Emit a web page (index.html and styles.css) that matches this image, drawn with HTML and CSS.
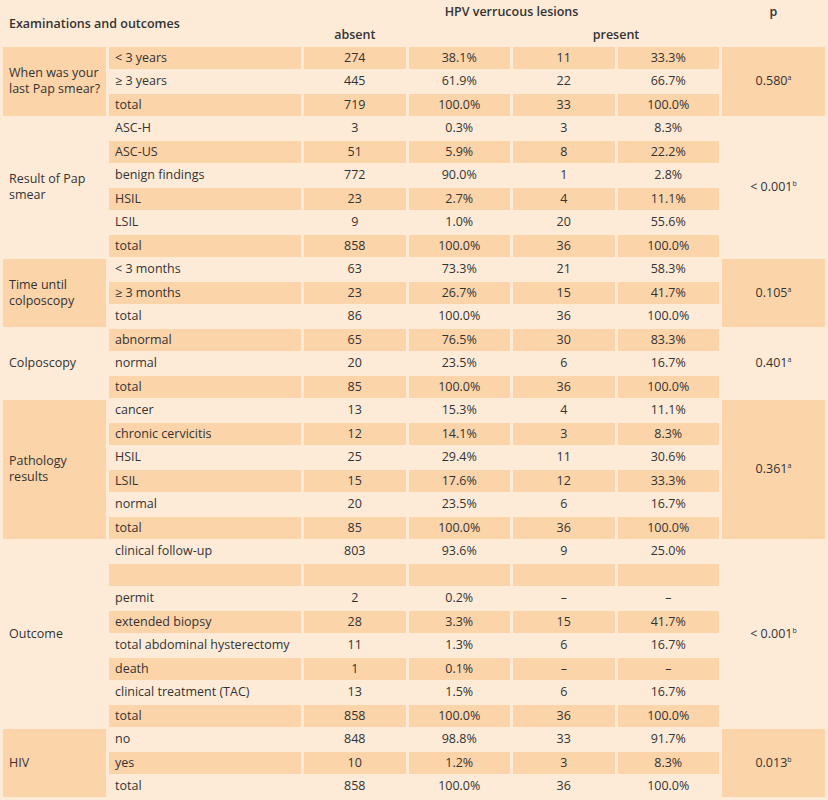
FILE: index.html
```html
<!DOCTYPE html>
<html lang="en">
<head>
  <meta charset="UTF-8">
  <title>HPV verrucous lesions</title>
  <link rel="stylesheet" href="styles.css">
</head>
<body>

  <table class="results">
    <colgroup>
      <col class="c-group">
      <col class="c-item">
      <col class="c-num">
      <col class="c-num">
      <col class="c-num">
      <col class="c-num">
      <col class="c-p">
    </colgroup>
    <thead>
      <tr class="head-1">
        <th rowspan="2" colspan="2" class="title">Examinations and outcomes</th>
        <th colspan="4">HPV verrucous lesions</th>
        <th>p</th>
      </tr>
      <tr class="head-2">
        <th>absent</th>
        <th></th>
        <th colspan="2">present</th>
        <th></th>
      </tr>
    </thead>
    <tbody>
      <!-- last pap smear -->
      <tr class="dk">
        <td rowspan="3" class="grp shade">When was your last Pap smear?</td>
        <td class="item">&lt; 3 years</td><td>274</td><td>38.1%</td><td>11</td><td>33.3%</td>
        <td rowspan="3" class="pv shade">0.580<sup>a</sup></td>
      </tr>
      <tr>
        <td class="item">&ge; 3 years</td><td>445</td><td>61.9%</td><td>22</td><td>66.7%</td>
      </tr>
      <tr class="dk">
        <td class="item">total</td><td>719</td><td>100.0%</td><td>33</td><td>100.0%</td>
      </tr>

      <!-- result of pap smear -->
      <tr>
        <td rowspan="6" class="grp">Result of Pap smear</td>
        <td class="item">ASC-H</td><td>3</td><td>0.3%</td><td>3</td><td>8.3%</td>
        <td rowspan="6" class="pv">&lt; 0.001<sup>b</sup></td>
      </tr>
      <tr class="dk">
        <td class="item">ASC-US</td><td>51</td><td>5.9%</td><td>8</td><td>22.2%</td>
      </tr>
      <tr>
        <td class="item">benign findings</td><td>772</td><td>90.0%</td><td>1</td><td>2.8%</td>
      </tr>
      <tr class="dk">
        <td class="item">HSIL</td><td>23</td><td>2.7%</td><td>4</td><td>11.1%</td>
      </tr>
      <tr>
        <td class="item">LSIL</td><td>9</td><td>1.0%</td><td>20</td><td>55.6%</td>
      </tr>
      <tr class="dk">
        <td class="item">total</td><td>858</td><td>100.0%</td><td>36</td><td>100.0%</td>
      </tr>

      <!-- time until colposcopy -->
      <tr>
        <td rowspan="3" class="grp shade">Time until colposcopy</td>
        <td class="item">&lt; 3 months</td><td>63</td><td>73.3%</td><td>21</td><td>58.3%</td>
        <td rowspan="3" class="pv shade">0.105<sup>a</sup></td>
      </tr>
      <tr class="dk">
        <td class="item">&ge; 3 months</td><td>23</td><td>26.7%</td><td>15</td><td>41.7%</td>
      </tr>
      <tr>
        <td class="item">total</td><td>86</td><td>100.0%</td><td>36</td><td>100.0%</td>
      </tr>

      <!-- colposcopy -->
      <tr class="dk">
        <td rowspan="3" class="grp">Colposcopy</td>
        <td class="item">abnormal</td><td>65</td><td>76.5%</td><td>30</td><td>83.3%</td>
        <td rowspan="3" class="pv">0.401<sup>a</sup></td>
      </tr>
      <tr>
        <td class="item">normal</td><td>20</td><td>23.5%</td><td>6</td><td>16.7%</td>
      </tr>
      <tr class="dk">
        <td class="item">total</td><td>85</td><td>100.0%</td><td>36</td><td>100.0%</td>
      </tr>

      <!-- pathology -->
      <tr>
        <td rowspan="6" class="grp shade">Pathology results</td>
        <td class="item">cancer</td><td>13</td><td>15.3%</td><td>4</td><td>11.1%</td>
        <td rowspan="6" class="pv shade">0.361<sup>a</sup></td>
      </tr>
      <tr class="dk">
        <td class="item">chronic cervicitis</td><td>12</td><td>14.1%</td><td>3</td><td>8.3%</td>
      </tr>
      <tr>
        <td class="item">HSIL</td><td>25</td><td>29.4%</td><td>11</td><td>30.6%</td>
      </tr>
      <tr class="dk">
        <td class="item">LSIL</td><td>15</td><td>17.6%</td><td>12</td><td>33.3%</td>
      </tr>
      <tr>
        <td class="item">normal</td><td>20</td><td>23.5%</td><td>6</td><td>16.7%</td>
      </tr>
      <tr class="dk">
        <td class="item">total</td><td>85</td><td>100.0%</td><td>36</td><td>100.0%</td>
      </tr>

      <!-- outcome -->
      <tr>
        <td rowspan="8" class="grp">Outcome</td>
        <td class="item">clinical follow-up</td><td>803</td><td>93.6%</td><td>9</td><td>25.0%</td>
        <td rowspan="8" class="pv">&lt; 0.001<sup>b</sup></td>
      </tr>
      <tr class="dk">
        <td class="item"></td><td></td><td></td><td></td><td></td>
      </tr>
      <tr>
        <td class="item">permit</td><td>2</td><td>0.2%</td><td>&ndash;</td><td>&ndash;</td>
      </tr>
      <tr class="dk">
        <td class="item">extended biopsy</td><td>28</td><td>3.3%</td><td>15</td><td>41.7%</td>
      </tr>
      <tr>
        <td class="item">total abdominal hysterectomy</td><td>11</td><td>1.3%</td><td>6</td><td>16.7%</td>
      </tr>
      <tr class="dk">
        <td class="item">death</td><td>1</td><td>0.1%</td><td>&ndash;</td><td>&ndash;</td>
      </tr>
      <tr>
        <td class="item">clinical treatment (TAC)</td><td>13</td><td>1.5%</td><td>6</td><td>16.7%</td>
      </tr>
      <tr class="dk">
        <td class="item">total</td><td>858</td><td>100.0%</td><td>36</td><td>100.0%</td>
      </tr>

      <!-- hiv -->
      <tr>
        <td rowspan="3" class="grp shade">HIV</td>
        <td class="item">no</td><td>848</td><td>98.8%</td><td>33</td><td>91.7%</td>
        <td rowspan="3" class="pv shade">0.013<sup>b</sup></td>
      </tr>
      <tr class="dk">
        <td class="item">yes</td><td>10</td><td>1.2%</td><td>3</td><td>8.3%</td>
      </tr>
      <tr>
        <td class="item">total</td><td>858</td><td>100.0%</td><td>36</td><td>100.0%</td>
      </tr>
    </tbody>
  </table>

</body>
</html>
```

FILE: styles.css
```css
* {
  padding: 0;
  margin: 0;
  box-sizing: border-box;
}

body {
  background-color: #fdebd8;
  font-family: 'Open Sans', 'Liberation Sans', sans-serif;
  font-size: 12.5px;
  color: #333333;
}

.results {
  width: 828px;
  table-layout: fixed;
  border-collapse: separate;
  border-spacing: 3px 2px;
}

.c-group { width: 103px; }
.c-item  { width: 192px; }
.c-num   { width: 101.5px; }
.c-p     { width: 103px; }

th {
  font-weight: 600;
  text-align: center;
  vertical-align: middle;
  line-height: 16px;
}

.head-1,
.head-2 {
  height: 20.5px;
}

.title {
  text-align: left;
  padding-left: 6px;
  white-space: nowrap;
}

tbody tr {
  height: 21.5px;
}

td {
  text-align: center;
  vertical-align: middle;
  line-height: 16px;
  white-space: nowrap;
}

.dk td {
  background-color: #fcd4aa;
}

td.item {
  text-align: left;
  padding-left: 6px;
}

td.grp,
td.pv {
  background-color: transparent;
}

td.grp {
  text-align: left;
  padding: 0 4px 0 6px;
  white-space: normal;
}

td.pv {
  padding-left: 0;
}

td.shade {
  background-color: #fcd4aa;
}

sup {
  font-size: 7px;
  vertical-align: 5px;
  line-height: 0;
}
```
